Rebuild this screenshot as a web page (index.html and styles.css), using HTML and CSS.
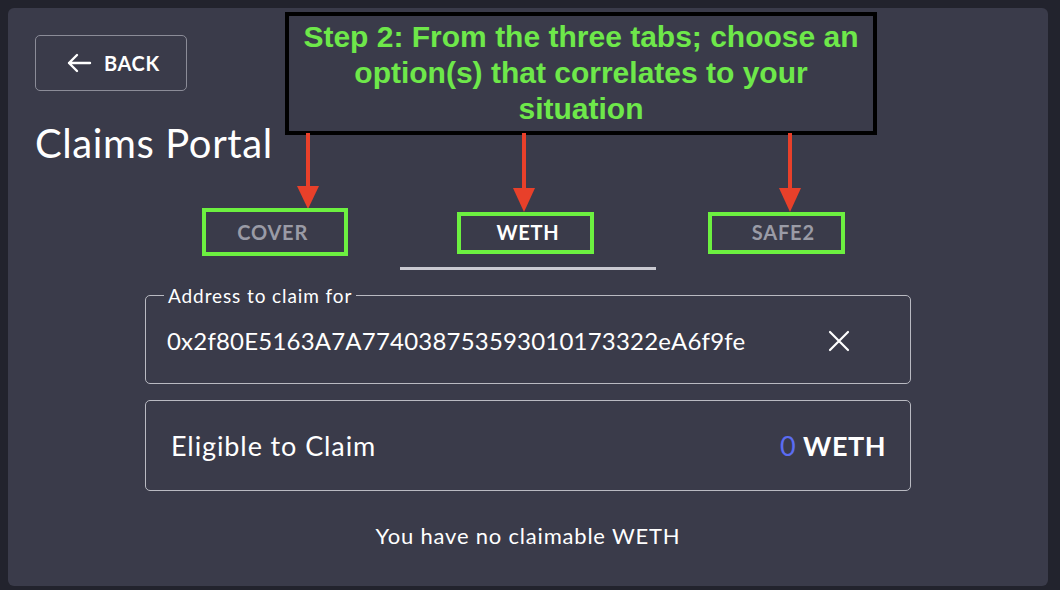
FILE: index.html
```html
<!DOCTYPE html>
<html lang="en">
<head>
    <meta charset="UTF-8">
    <meta name="viewport" content="width=device-width, initial-scale=1.0">
    <title>Claims Portal</title>
    <link rel="stylesheet" href="styles.css">
</head>
<body>
    <div class="card">
        <button class="back-btn">
            <svg width="26" height="22" viewBox="0 0 26 22" fill="none" stroke="#fff" stroke-width="2.4" stroke-linecap="round" stroke-linejoin="round">
                <path d="M24 11H3M11 3L3 11l8 8"/>
            </svg>
            BACK
        </button>
        <h1 class="title">Claims Portal</h1>

        <div class="content">
            <div class="tabs">
                <div class="tab">COVER</div>
                <div class="tab active">WETH</div>
                <div class="tab">SAFE2</div>
            </div>

            <fieldset class="field">
                <legend>Address to claim for</legend>
                <div class="field-row">
                    <span class="address">0x2f80E5163A7A774038753593010173322eA6f9fe</span>
                    <svg class="clear" width="22" height="22" viewBox="0 0 22 22" stroke="#fff" stroke-width="2.2" stroke-linecap="round">
                        <path d="M2 2l18 18M20 2L2 20"/>
                    </svg>
                </div>
            </fieldset>

            <div class="eligible">
                <span>Eligible to Claim</span>
                <span class="amount"><span class="zero">0</span> WETH</span>
            </div>

            <p class="note">You have no claimable WETH</p>
        </div>

        <!-- annotation overlay -->
        <div class="callout">Step 2: From the three tabs; choose an option(s) that correlates to your situation</div>
        <svg class="arrows" width="1040" height="260" viewBox="0 0 1040 260">
            <g fill="#e8402a" stroke="#e8402a">
                <path d="M300 125 L300 180" stroke-width="4"/>
                <path d="M289 178 L311 178 L300 201 Z" stroke="none"/>
                <path d="M516 125 L516 182" stroke-width="4"/>
                <path d="M505 180 L527 180 L516 204 Z" stroke="none"/>
                <path d="M782 125 L782 182" stroke-width="4"/>
                <path d="M771 180 L793 180 L782 204 Z" stroke="none"/>
            </g>
        </svg>
        <div class="mark mark-cover"></div>
        <div class="mark mark-weth"></div>
        <div class="mark mark-safe"></div>
    </div>
</body>
</html>
```

FILE: styles.css
```css
body {
    margin: 0;
    background-color: #22232d;
    font-family: Lato, "Noto Sans", sans-serif;
    color: #fff;
    height: 590px;
    overflow: hidden;
}
.card {
    position: relative;
    margin: 8px 12px 0 8px;
    height: 578px;
    background-color: #3a3b4a;
    border-radius: 6px;
    box-sizing: border-box;
    padding: 27px 27px 0 27px;
}
.back-btn {
    display: flex;
    align-items: center;
    gap: 12px;
    width: 152px;
    height: 56px;
    padding: 0 0 0 30px;
    background: transparent;
    border: 1.5px solid #8b8c98;
    border-radius: 5px;
    color: #fff;
    font-family: inherit;
    font-size: 20px;
    font-weight: 700;
    letter-spacing: 0.6px;
}
.title {
    margin: 30px 0 0 0;
    font-size: 40px;
    font-weight: 400;
    line-height: 44px;
    letter-spacing: 0.6px;
}
.content {
    width: 766px;
    margin: 43px auto 0 auto;
}
.tabs {
    display: flex;
}
.tab {
    flex: 1;
    text-align: center;
    font-size: 20px;
    font-weight: 700;
    letter-spacing: 0.8px;
    color: #9a9ba6;
    padding: 12px 0 23px 0;
    border-bottom: 3px solid transparent;
}
.tab.active {
    color: #fff;
    border-bottom-color: #c9c9d1;
}
.field {
    margin: 14px 0 0 0;
    padding: 4px 20px 28px 21px;
    border: 1.5px solid #b9bac2;
    border-radius: 5px;
}
.field legend {
    font-size: 19px;
    letter-spacing: 0.9px;
    padding: 0 4px;
    margin-left: -3px;
    color: #fff;
}
.field-row {
    display: flex;
    justify-content: space-between;
    align-items: center;
    padding-right: 40px;
    margin-top: 15px;
}
.address {
    font-size: 24px;
    letter-spacing: 0.2px;
}
.eligible {
    display: flex;
    justify-content: space-between;
    align-items: center;
    margin-top: 16px;
    height: 89px;
    padding: 0 24px 0 25px;
    border: 1.5px solid #b9bac2;
    border-radius: 5px;
    font-size: 27px;
    letter-spacing: 0.9px;
}
.amount {
    font-weight: 700;
    letter-spacing: 0.5px;
}
.zero {
    color: #5b6cf2;
    font-weight: 400;
}
.note {
    margin: 31px 0 0 0;
    text-align: center;
    font-size: 22px;
    letter-spacing: 0.8px;
}

/* annotation overlay */
.callout {
    position: absolute;
    left: 277px;
    top: 4px;
    width: 592px;
    height: 123px;
    box-sizing: border-box;
    border: 4px solid #000;
    padding-top: 3px;
    background-color: #3a3b4a;
    color: #6ee84a;
    font-family: "Liberation Sans", Arial, sans-serif;
    font-size: 30px;
    font-weight: 700;
    line-height: 36px;
    text-align: center;
}
.arrows {
    position: absolute;
    left: 0;
    top: 0;
}
.mark {
    position: absolute;
    border: 4px solid #6cf040;
    box-sizing: border-box;
}
.mark-cover {
    left: 194px;
    top: 200px;
    width: 146px;
    height: 48px;
}
.mark-weth {
    left: 449px;
    top: 204px;
    width: 137px;
    height: 42px;
}
.mark-safe {
    left: 700px;
    top: 204px;
    width: 137px;
    height: 42px;
}
```
